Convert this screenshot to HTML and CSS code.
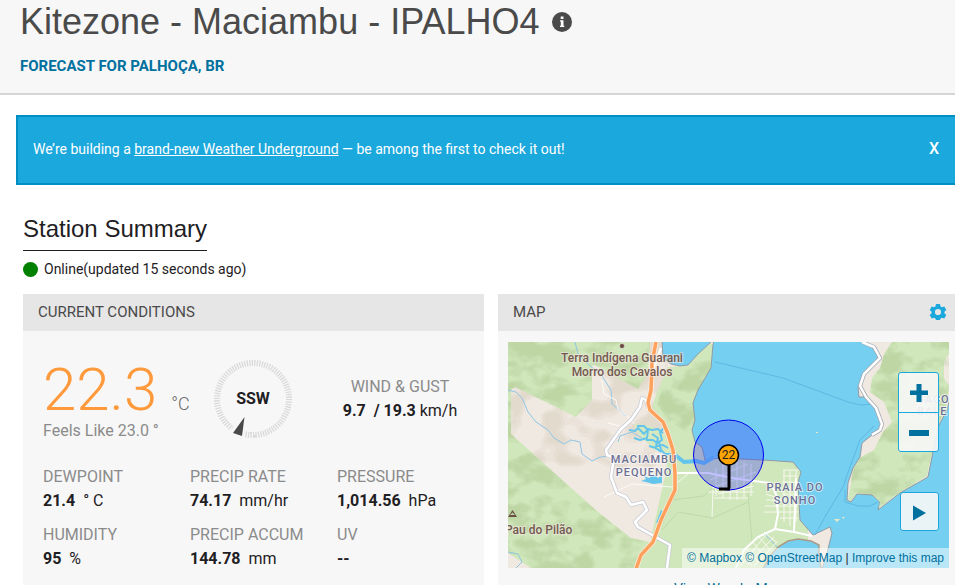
FILE: index.html
```html
<!DOCTYPE html>
<html lang="en">
<head>
<meta charset="utf-8">
<title>Kitezone - Maciambu - IPALHO4</title>
<link rel="stylesheet" href="styles.css">
</head>
<body>
<header class="station-header">
  <h1 class="station-title">Kitezone - Maciambu - IPALHO4
    <button class="info" aria-label="Station information"><svg viewBox="0 0 20 20"><circle cx="10" cy="10" r="10" fill="#4a4a4a"/><path d="M8.700 4.500h2.800V7H8.700zM8 8.200h3.500v5.600h.8V15H8v-1.200h.8V9.400H8z" fill="#fff"/></svg></button>
  </h1>
  <a class="forecast" href="#">FORECAST FOR PALHOÇA, BR</a>
</header>

<aside class="banner">
  <p>We’re building a <a href="#">brand-new Weather Underground</a> — be among the first to check it out!</p>
  <button class="banner-close">X</button>
</aside>

<main class="main">
  <h2 class="section-title">Station Summary</h2>
  <p class="status"><span class="dot"></span>Online(updated 15 seconds ago)</p>
  <div class="cards">
    <section class="card">
      <h3 class="card-head">CURRENT CONDITIONS</h3>
      <div class="conditions">
        <div class="temp">
          <p class="temp-value"><span class="degrees">22.3</span><span class="degree-unit">°C</span></p>
          <p class="label">Feels Like 23.0 °</p>
        </div>
        <div class="compass">
          <svg viewBox="0 0 80 80" role="img" aria-label="Wind direction">
            <circle cx="40" cy="39" r="36" fill="none" stroke="#d9d9d9" stroke-width="6" pathLength="180" stroke-dasharray="1 1"/>
            <path d="M31 57.500 18 72l12 5z" fill="#f7f7f7" stroke="#f7f7f7" stroke-width="3"/>
            <path d="M31.500 57 20 73l9 3z" fill="#4a4a4a"/>
          </svg>
          <strong class="direction">SSW</strong>
        </div>
        <div class="wind">
          <p class="label">WIND &amp; GUST</p>
          <p class="value"><b>9.7 &nbsp;/ 19.3</b> km/h</p>
        </div>
        <div><p class="label">DEWPOINT</p><p class="value"><b>21.4</b> &nbsp;° C</p></div>
        <div><p class="label">PRECIP RATE</p><p class="value"><b>74.17</b> &nbsp;mm/hr</p></div>
        <div><p class="label">PRESSURE</p><p class="value"><b>1,014.56</b> &nbsp;hPa</p></div>
        <div><p class="label">HUMIDITY</p><p class="value"><b>95</b> &nbsp;%</p></div>
        <div><p class="label">PRECIP ACCUM</p><p class="value"><b>144.78</b> &nbsp;mm</p></div>
        <div><p class="label">UV</p><p class="value"><b>--</b></p></div>
      </div>
    </section>

    <section class="card">
      <div class="card-head">
        <h3>MAP</h3>
        <button class="gear" aria-label="Map settings"><svg viewBox="0 0 18 18"><path fill-rule="evenodd" fill="#1ba8dd" d="M7 1h4l.6 2.500 1.300.8 2.400-.8 2 3.500-1.900 1.700v1.600L17.300 12l-2 3.500-2.400-.8-1.300.8L11 17H7l-.6-1.500-1.300-.8-2.400.8L.7 12l1.900-1.700V8.700L.7 7l2-3.500 2.400.8 1.300-.8zM9 5.900a3.100 3.100 0 1 0 0 6.200 3.100 3.100 0 0 0 0-6.200z"/></svg></button>
      </div>
      <div class="map">
        <svg class="map-art" viewBox="0 0 441 226" role="img" aria-label="Map of Maciambu Pequeno and Praia do Sonho">
          <defs>
            <filter id="shade" x="0" y="0" width="1" height="1" color-interpolation-filters="sRGB">
              <feTurbulence type="fractalNoise" baseFrequency=".035 .05" numOctaves="3" seed="8"/>
              <feColorMatrix values="0 0 0 0 .5  0 0 0 0 .64  0 0 0 0 .36  3 0 0 0 -1"/>
              <feComponentTransfer><feFuncA type="discrete" tableValues="0 0 .07 .13 .19 .24"/></feComponentTransfer>
            </filter>
            <filter id="dry" x="0" y="0" width="1" height="1" color-interpolation-filters="sRGB">
              <feTurbulence type="fractalNoise" baseFrequency=".03 .04" numOctaves="2" seed="3"/>
              <feColorMatrix values="0 0 0 0 .62  0 0 0 0 .54  0 0 0 0 .42  3 0 0 0 -1"/>
              <feComponentTransfer><feFuncA type="discrete" tableValues="0 0 0 .06 .12 .16"/></feComponentTransfer>
            </filter>
            <clipPath id="hills">
              <path d="M0 0H142L140 31 130 47 87 23 84 24V58L68 75 7 45 3 48V92L90 170 123 196 142 200 128 226H23L0 211z"/>
              <path d="M203 1 205 3 203 26 190 48 185 61 187 78 184 88 178 90 160 78 149 62 160 30 180 25 190 12z"/>
              <path d="M384 0H441V46L425 110 420 135 392 151 370 168 372 160 364 153 349 152 343 160 339 158 345 126 352 115 366 108 375 90 384 80 376 60 362 50 364 36 372 26 376 12z"/>
            </clipPath>
          </defs>
          <rect width="441" height="226" fill="#f0e9e1"/>
          <rect width="160" height="130" filter="url(#dry)"/>
          <path fill="#d0e6bb" d="M0 0H142L140 31 130 47 87 23 84 24V58L68 75 7 45 3 48V92L90 170 123 196 142 200 158 130 161 100 205 112 300 110V226H128 23L0 211z"/>
          <path fill="#d0e6bb" d="M203 1 205 3 203 26 190 48 185 61 187 78 184 88 187 100 194 105 197 118 165 112 155 80 144 65 149 50 160 25 180 24 190 12z"/>
          <path fill="#d5e8c0" d="M126 82 143 84 160 94 162 112 146 108 132 94z"/>

          <path fill="#75cff0" stroke="#8e9ba5" stroke-width="1" d="M206-2 205 3 203 26 190 48 185 61 187 78 184 88 187 100 194 105 197 118 212 116 255 118 285 120 293 130 290 141 292 178 305 193 322 185 324 191 319 211 314 227H445V-2z"/>
          <path fill="#75cff0" stroke="#8e9ba5" d="M154-1 155 16 163 22 172 24 180 23 190 12 203 0V-2z"/>
          <path fill="#75cff0" stroke="#a99b85" stroke-width="1.500" d="M255 227 262 214 270 205 280 199 290 197 303 199 311 203 311 211 313 227z"/>

          <path fill="#f0e9e1" stroke="#8e9ba5" d="M354-2 369 10 370 18 355 31 350 45 351 55 357 55 367 63 372 73 373 85 364 93 354 101 352 115 345 126 340 141 339 158 343 160 349 152 364 153 372 160 370 168 392 151 420 135 425 110 430 85 439 68 445 44V-2z"/>
          <path fill="#d0e6bb" d="M384 0H441V46L438 68 429 85 424 110 419 134 392 150 371 166 372 160 364 152 349 151 343 158 340 157 346 126 353 115 366 108 375 90 384 80 376 60 362 50 364 36 372 26 376 12z"/>
          <path fill="#f0e9e1" d="M441 12 436 20V36L441 44z"/>
          <g clip-path="url(#hills)"><rect width="441" height="226" filter="url(#shade)"/></g>

          <g fill="none" stroke="#5db8e4" stroke-width="1">
            <path d="M207 20 275 36 340 60 352 63 365 62"/>
            <path d="M366 84 352 98 343 122 335 145 318 173 307 193M337 148V160L350 164H362L370 160"/>
          </g>
          <g fill="none" stroke="#8fc6e6" stroke-width="1">
            <path d="M67 0 70 12 80 22 94 34 103 48 104 62 118 74"/>
            <path d="M0 48 8 50 14 56 20 70 28 80 40 88 46 96 56 102 63 98 72 100 74 112 84 119 92 115 105 114M110 100 112 94 124 90 134 96M0 210 10 212 14 220 8 226M256 191 269 205"/>
          </g>
          <g fill="none" stroke="#64c5ec" stroke-width="2" stroke-linejoin="round">
            <path d="M121 88 127 89 130 86 136 92 140 87 144 88 150 87 155 91M129 84 136 84 140 88 139 96 132 98 126 96M138 98 145 98 149 101 154 98 152 90 156 86M144 92 150 96 148 104 155 103 160 106M151 100 153 108 157 112 164 112M141 104 148 106 153 110"/>
            <path stroke-width="4" d="M167 113 176 120 188 119 196 121 206 115"/>
          </g>
          <path fill="#64c5ec" d="M133 139 138 137 136 134 141 136 146 132 150 136 154 133 154 141 145 142 138 140zM153 168 156 170 151 180 148 181z"/>

          <g fill="none" stroke="#fff" stroke-width="1" opacity=".8">
            <path d="M94 38 96 52 108 58 110 68 122 76 126 82M100 81 112 84M96 155 124 142 164 145 180 132"/>
            <path d="M205 148 204 176"/>
          </g>
          <path fill="none" stroke="#bfdaa9" d="M164 158 196 154 210 140M150 190 168 152M154 188 170 170 205 176 240 160M240 150 244 200"/>
          <g fill="none" stroke="#f7f8ee" stroke-width="1">
            <path d="M202 138 240 122M204 146 248 130M210 152 246 144M208 126V154M215 122V156M222 120V158M229 120V158M236 120V156M243 122V154M200 150 246 150M206 156 240 156"/>
            <path d="M275 128H291M275 134H290M274 140H290M274 146H290M274 152H290M270 158H290M270 164H290M270 170H290M272 176H290M276 128V180M282 128V184M288 128V180M258 152 270 156M258 158H270M257 164H270M256 170H270"/>
            <path d="M250 194 262 208M244 199 256 214M238 206 250 220M234 212 244 224M256 190 268 200M246 224 270 199M240 222 266 195M232 224 258 193"/>
          </g>
          <g fill="none" stroke="#fff" stroke-width="2" stroke-linejoin="round">
            <path d="M168 131H200L230 137 262 141 268 152 270 172 267 187 286 190 288 136M267 187 250 195 236 208 228 226M286 190 304 194"/>
          </g>
          <g fill="none" stroke-linejoin="round">
            <path stroke="#c8cbd6" stroke-width="4" d="M140 66 138 58 134 56 132 65 123 78 113 87 98 108 99 113 106 116 103 135 109 151 118 155 123 163 135 160 139 168 127 180 130 185 162 203 159 226"/>
            <path stroke="#fff" stroke-width="2.500" d="M140 66 138 58 134 56 132 65 123 78 113 87 98 108 99 113 106 116 103 135 109 151 118 155 123 163 135 160 139 168 127 180 130 185 162 203 159 226"/>
            <path stroke="#a3a8b3" stroke-width="4" d="M354 0 366 5 372 16 356 32 352 44 358 55 368 66 374 82 372 88 364 93"/>
            <path stroke="#fff" stroke-width="2.500" d="M153 6 148 20 144 28M354 0 366 5 372 16 356 32 352 44 358 55 368 66 374 82 372 88 364 93"/>
            <path stroke="#fbeee0" stroke-width="5" d="M148 0 144 21 143 48 140 61 142 68 155 80 160 92 165 108 167 131V148L153 178 145 200 133 213 128 227"/>
            <path stroke="#ffa15c" stroke-width="3.500" d="M148 0 144 21 143 48 140 61 142 68 155 80 160 92 165 108 167 131V148L153 178 145 200 133 213 128 227"/>
          </g>
          <path fill="#e9e8c8" d="M326 177 332 177 329 180zM334 175 337 175 335 177zM308 90h2v1h-2z"/>

          <circle cx="114" cy="4" r="2.500" fill="#6b4a3f" stroke="#fff" stroke-width=".5"/>
          <path d="M4.500 168 0 175H9zM4.500 170.500 2 173H7z" fill="#6b5146" fill-rule="evenodd"/>
          <g class="place">
            <text x="114" y="20">Terra Indígena Guarani</text>
            <text x="114" y="34">Morro dos Cavalos</text>
            <text class="start" x="-3" y="192">Pau do Pilão</text>
          </g>
          <g class="town">
            <text x="136" y="121">MACIAMBU</text>
            <text x="136" y="134">PEQUENO</text>
            <text x="287" y="149">PRAIA DO</text>
            <text x="287" y="162">SONHO</text>
            <text class="start" x="409" y="61">SACO</text>
            <text class="start" x="409" y="73">BALE</text>
          </g>

          <circle cx="220.500" cy="113" r="35" fill="#3333ff" fill-opacity=".3" stroke="#0000ee"/>
          <path d="M221 122V146.500M211 147H222" stroke="#000" stroke-width="3" fill="none"/>
          <circle cx="220.500" cy="113" r="10" fill="#ffa500" stroke="#000" stroke-width="1.500"/>
          <text class="pin" x="220.500" y="117">22</text>
        </svg>
        <div class="zoom">
          <button aria-label="Zoom in"><svg viewBox="0 0 20 20"><path d="M7.500 1h5v6.500H19v4.500h-6.500V19h-5v-7H1V7.500h6.500z"/></svg></button>
          <button aria-label="Zoom out"><svg viewBox="0 0 20 20"><path d="M0 8h20v6H0z"/></svg></button>
        </div>
        <button class="play" aria-label="Play"><svg viewBox="0 0 20 20"><path d="M3 3.500 16 11 3 18.500z"/></svg></button>
        <p class="credits"><a href="#">© Mapbox</a> <a href="#">© OpenStreetMap</a> | <a href="#">Improve this map</a></p>
      </div>
      <a class="wundermap" href="#">View WunderMap</a>
    </section>
  </div>
</main>
</body>
</html>
```
FILE: styles.css
```css
* { box-sizing: border-box; }
html, body { height: 100%; }
body {
  margin: 0;
  overflow: hidden;
  background: #fff;
  color: #1e2023;
  font: 16px/24px Roboto, "Liberation Sans", sans-serif;
}
h1, h2, h3, p { margin: 0; font-weight: 400; }
button { border: 0; padding: 0; background: none; font: inherit; color: inherit; cursor: pointer; }
svg { display: block; }
a { color: #00709e; text-decoration: none; }

.station-header { padding: 0 20px 15px; background: #f7f7f7; border-bottom: 2px solid #d5d5d5; }
.station-title {
  display: flex;
  align-items: center;
  gap: 12px;
  color: #4a4a4a;
  font: 36px/44px "Liberation Sans", Arial, sans-serif;
}
.info svg { width: 20px; height: 20px; }
.forecast { display: block; margin-top: 10px; font-size: 15px; line-height: 24px; font-weight: 700; }

.banner {
  display: flex;
  align-items: center;
  justify-content: space-between;
  height: 70px;
  margin: 20px -4px 0 16px;
  padding: 0 18px 2px 15px;
  border: 2px solid #008fc2;
  background: #1ba8dd;
  color: #fff;
  font-size: 14px;
  font-weight: 500;
}
.banner a { color: inherit; text-decoration: underline; }
.banner-close { font-size: 16px; }

.main { margin-right: -4px; padding: 30px 0 0 23px; }
.section-title {
  width: fit-content;
  padding-bottom: 7px;
  border-bottom: 1px solid #1e2023;
  font: 24px/28px "Liberation Sans", Arial, sans-serif;
}
.status { display: flex; align-items: center; gap: 6px; margin: 6px 0 13px; font-size: 14px; }
.dot { width: 15px; height: 15px; border-radius: 50%; background: #008000; }

.cards { display: grid; grid-template-columns: 1fr 1fr; gap: 14px; }
.card { background: #f7f7f7; }
.card-head {
  display: flex;
  align-items: center;
  justify-content: space-between;
  height: 37px;
  padding: 0 12px 2px 15px;
  background: #e6e6e6;
  color: #4a4a4a;
  font-size: 15px;
}
.card-head h3 { font-size: inherit; }
.gear svg { width: 18px; height: 18px; }

.conditions {
  display: grid;
  grid-template-columns: repeat(3, minmax(0, 1fr));
  row-gap: 10px;
  padding: 29px 0 32px 20px;
}
.label { color: #8b8b8b; }
.temp-value { display: flex; align-items: baseline; height: 59px; gap: 14px; line-height: 59px; }
.degrees { color: #ff9a3c; font-size: 60px; font-weight: 300; }
.degree-unit { color: #6a6a6a; font-weight: 300; font-size: 18px; }
.compass { position: relative; width: 80px; margin: 0 0 15px 23px; }
.direction { position: absolute; inset: 0 0 auto; display: grid; place-items: center; height: 78px; }
.wind { padding: 15px 21px 0 0; text-align: center; }

.map { position: relative; margin: 11px 10px 0; }
.map-art { width: 100%; }
.map .start { text-anchor: start; }
.place text {
  font: 500 12px Roboto, sans-serif;
  fill: #735a50;
  text-anchor: middle;
  paint-order: stroke;
  stroke: #f0e9e1;
  stroke-opacity: .6;
  stroke-width: 2px;
}
.town text {
  font: 500 11px Roboto, sans-serif;
  letter-spacing: 1px;
  fill: #6c7095;
  text-anchor: middle;
  paint-order: stroke;
  stroke: #fff;
  stroke-opacity: .6;
  stroke-width: 2px;
}
.pin { font: 12px Roboto, sans-serif; fill: #222; text-anchor: middle; }
.zoom {
  position: absolute;
  top: 30px;
  right: 10px;
  width: 41px;
  border: 1px solid #1ba8dd;
  border-radius: 3px;
  background: rgba(247, 247, 247, .9);
}
.zoom button { display: grid; place-items: center; width: 100%; height: 39px; }
.zoom button + button { border-top: 1px solid #1ba8dd; }
.zoom svg, .play svg { width: 20px; height: 20px; fill: #00709e; }
.play {
  position: absolute;
  top: 150px;
  right: 10px;
  display: grid;
  place-items: center;
  width: 39px;
  height: 39px;
  border: 1px solid #1ba8dd;
  border-radius: 3px;
  background: rgba(247, 247, 247, .9);
}
.credits {
  position: absolute;
  right: 0;
  bottom: 0;
  padding: 0 5px;
  background: rgba(255, 255, 255, .5);
  font: 12px/20px "Liberation Sans", Arial, sans-serif;
}
.wundermap { display: block; margin-top: 9px; text-align: center; font-size: 14px; }
```
